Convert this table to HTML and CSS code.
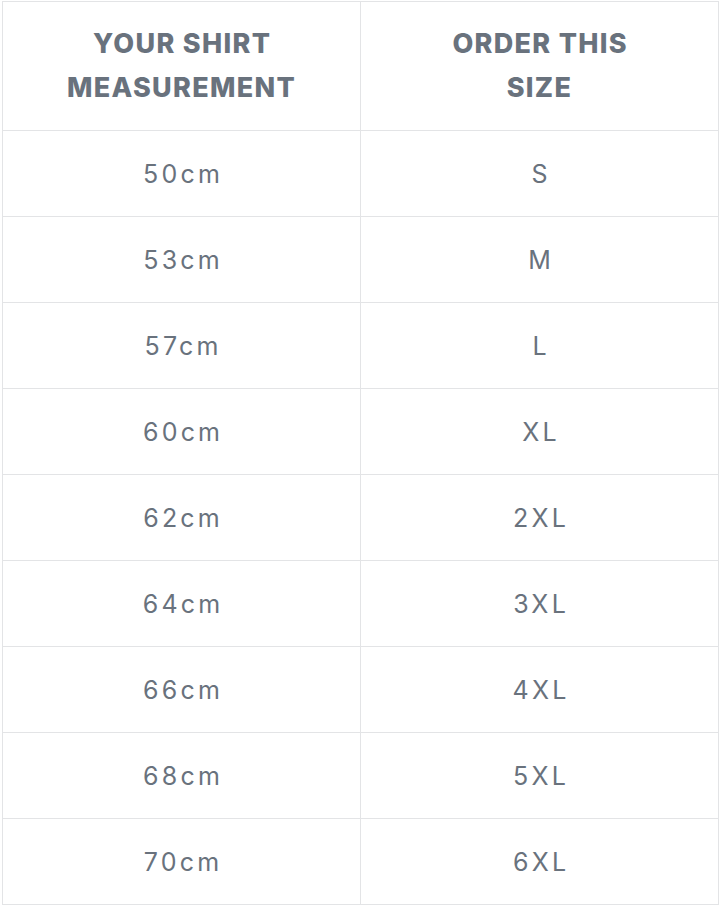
FILE: index.html
```html
<!DOCTYPE html>
<html>
<head>
<meta charset="utf-8">
<link rel="stylesheet" href="styles.css">
</head>
<body>
<table class="size-table">
  <thead>
    <tr>
      <th>YOUR SHIRT<br>MEASUREMENT</th>
      <th>ORDER THIS<br>SIZE</th>
    </tr>
  </thead>
  <tbody>
    <tr><td>50cm</td><td>S</td></tr>
    <tr><td>53cm</td><td>M</td></tr>
    <tr><td>57cm</td><td>L</td></tr>
    <tr><td>60cm</td><td>XL</td></tr>
    <tr><td>62cm</td><td>2XL</td></tr>
    <tr><td>64cm</td><td>3XL</td></tr>
    <tr><td>66cm</td><td>4XL</td></tr>
    <tr><td>68cm</td><td>5XL</td></tr>
    <tr><td>70cm</td><td>6XL</td></tr>
  </tbody>
</table>
</body>
</html>
```
FILE: styles.css
```css
html, body {
  margin: 0;
  padding: 0;
  background: #ffffff;
}
body {
  padding: 1px 0 0 2px;
  font-family: Inter, "Noto Sans", sans-serif;
  color: #69727d;
}
.size-table {
  border-collapse: separate;
  border-spacing: 0;
  border-top: 1px solid #e3e4e6;
  border-left: 1px solid #e3e4e6;
  table-layout: fixed;
  width: 717px;
}
.size-table th,
.size-table td {
  border-right: 1px solid #e3e4e6;
  border-bottom: 1px solid #e3e4e6;
  text-align: center;
  vertical-align: middle;
  padding: 0;
  box-sizing: border-box;
}
.size-table th {
  height: 129px;
  font-size: 27px;
  font-weight: 800;
  line-height: 44px;
  letter-spacing: 1.3px;
  text-indent: 1.3px;
}
.size-table td {
  height: 86px;
  font-size: 25px;
  font-weight: 400;
  letter-spacing: 3.2px;
  text-indent: 3.2px;
}
```
